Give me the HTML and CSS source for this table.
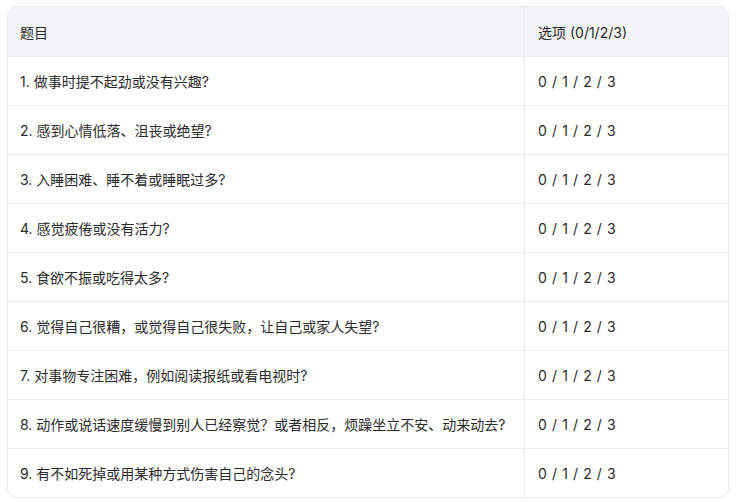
FILE: index.html
```html
<!DOCTYPE html>
<html lang="zh-CN">
<head>
<meta charset="utf-8">
<link rel="stylesheet" href="styles.css">
</head>
<body>
<div class="wrap">
<table class="tbl">
<thead>
<tr><th class="q">题目</th><th class="o">选项 (0/1/2/3)</th></tr>
</thead>
<tbody>
<tr><td class="q">1. 做事时提不起劲或没有兴趣?</td><td class="o">0 / 1 / 2 / 3</td></tr>
<tr><td class="q">2. 感到心情低落、沮丧或绝望?</td><td class="o">0 / 1 / 2 / 3</td></tr>
<tr><td class="q">3. 入睡困难、睡不着或睡眠过多?</td><td class="o">0 / 1 / 2 / 3</td></tr>
<tr><td class="q">4. 感觉疲倦或没有活力?</td><td class="o">0 / 1 / 2 / 3</td></tr>
<tr><td class="q">5. 食欲不振或吃得太多?</td><td class="o">0 / 1 / 2 / 3</td></tr>
<tr><td class="q">6. 觉得自己很糟，或觉得自己很失败，让自己或家人失望?</td><td class="o">0 / 1 / 2 / 3</td></tr>
<tr><td class="q">7. 对事物专注困难，例如阅读报纸或看电视时?</td><td class="o">0 / 1 / 2 / 3</td></tr>
<tr><td class="q">8. 动作或说话速度缓慢到别人已经察觉？或者相反，烦躁坐立不安、动来动去?</td><td class="o">0 / 1 / 2 / 3</td></tr>
<tr><td class="q">9. 有不如死掉或用某种方式伤害自己的念头?</td><td class="o">0 / 1 / 2 / 3</td></tr>
</tbody>
</table>
</div>
</body>
</html>
```
FILE: styles.css
```css
html, body { margin: 0; padding: 0; background: #fff; }
body {
  padding: 6px 8px 0 7px;
  font-family: Inter, "Noto Sans CJK SC", sans-serif;
  font-size: 14px;
  color: #2b2b2b;
}
.wrap {
  width: 720px;
  border: 1px solid #ececec;
  border-radius: 10px;
  overflow: hidden;
  box-shadow: 0 1px 2px rgba(0,0,0,0.04);
}
.tbl {
  width: 100%;
  border-collapse: collapse;
  table-layout: fixed;
}
.tbl th, .tbl td {
  text-align: left;
  font-weight: 400;
  padding: 0 12px;
  white-space: nowrap;
}
.tbl th {
  height: 49px;
  background: #f3f4f5;
}
.tbl td {
  height: 48px;
  border-top: 1px solid #ececec;
}
.tbl .q { width: 492px; }
.tbl .o { border-left: 1px solid #ececec; padding-left: 13px; }
.tbl td.o { letter-spacing: 0.6px; }
```
